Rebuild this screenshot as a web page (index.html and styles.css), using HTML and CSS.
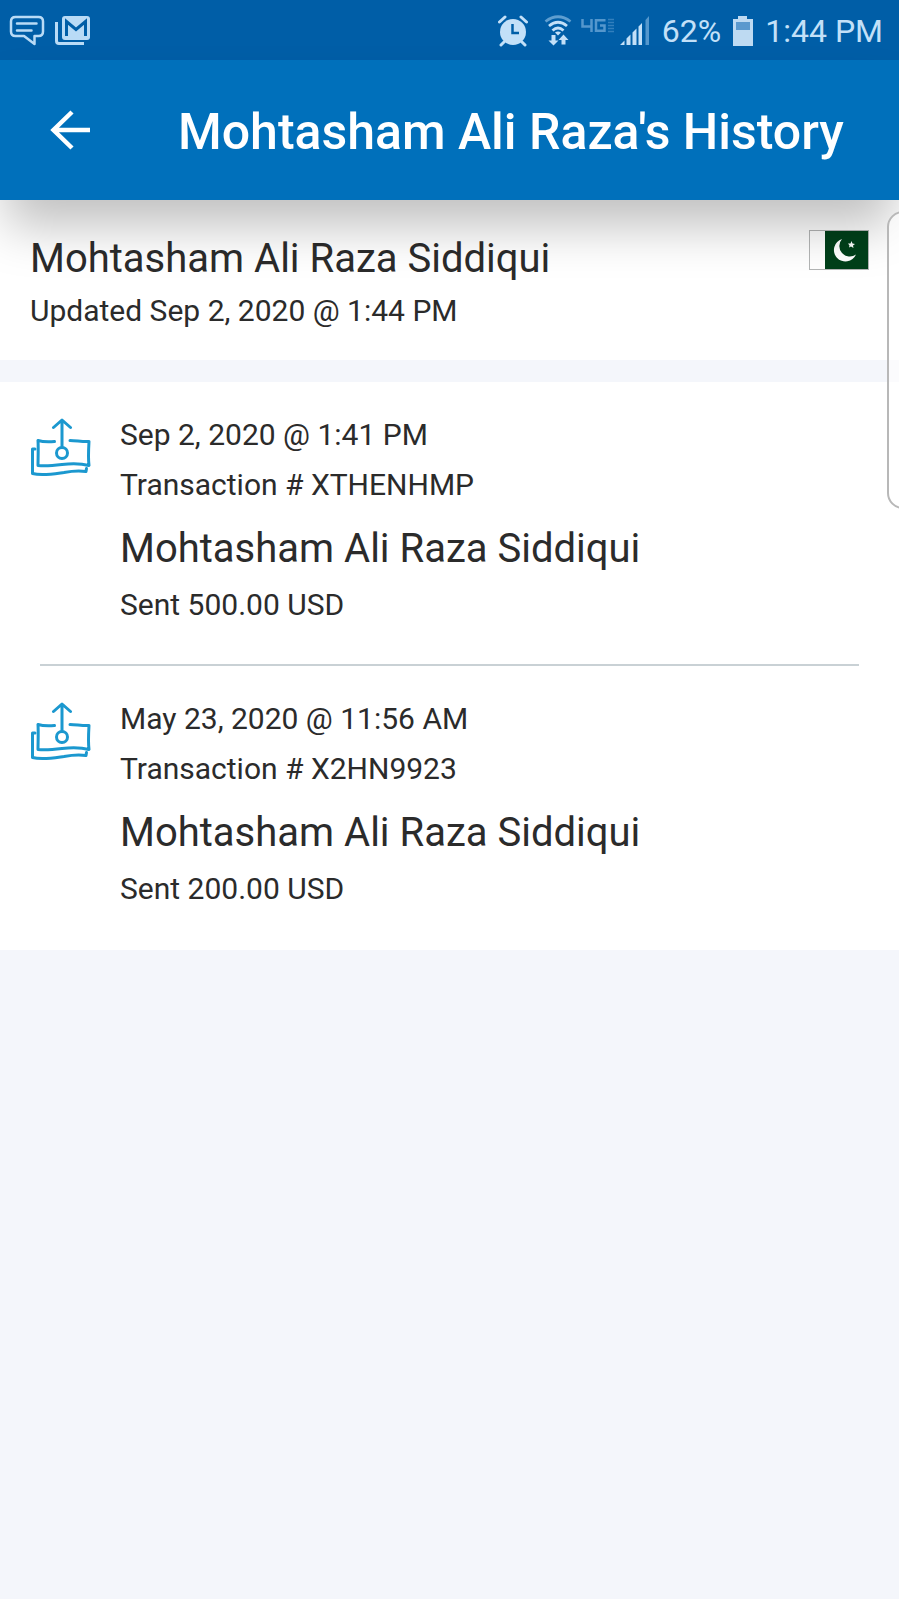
FILE: index.html
```html
<!DOCTYPE html>
<html lang="en">
<head>
<meta charset="utf-8">
<meta name="viewport" content="width=device-width, initial-scale=1">
<title>Mohtasham Ali Raza's History</title>
<link rel="stylesheet" href="styles.css">
</head>
<body>
<svg class="defs" width="0" height="0" aria-hidden="true">
  <symbol id="money-sent" viewBox="0 0 64 60">
    <g fill="none" stroke="#1b98cf" stroke-width="3" stroke-linecap="round" stroke-linejoin="round">
      <path d="M24.500 23.500C18 24 13 24 8 22.500C8.500 31 8 40 8 47.500C16 48.500 24 47.500 32 46.500C42 45.500 51 45.500 59 47.500C58 40 58.500 32 59 23.500C53 24 46 22.500 40 22.500"/>
      <path d="M5 31H2.500V55.500C12 58 23 56 34 54.500C42 53 49 52.500 56 53.500L56.500 50.500"/>
      <circle cx="32" cy="35" r="5.500"/>
      <path d="M32 29V3M23.500 9.500L32 2L40.500 9.500"/>
    </g>
  </symbol>
</svg>

<div class="status">
  <div class="status-group">
    <svg width="36" height="32" viewBox="0 0 36 32" fill="none" stroke="#b9dbf6" stroke-width="2.500" stroke-linecap="round" stroke-linejoin="round"><path d="M6.500 2H29.500Q34 2 34 6.500V16.500Q34 21 29.500 21H25.500V29L15 21H6.500Q2 21 2 16.500V6.500Q2 2 6.500 2Z"/><path d="M8 8.500H27.500M8 15.500H22.500"/></svg>
    <svg width="36" height="32" viewBox="0 0 36 32"><rect x="7" y="1" width="28" height="24" rx="3" fill="#b9dbf6"/><path d="M1.500 7V26Q1.500 28.500 4 28.500H29" fill="none" stroke="#b9dbf6" stroke-width="3"/><path d="M11.500 21V6.500L21 14.500L30.500 6.500V21" fill="none" stroke="#005ea7" stroke-width="3"/></svg>
  </div>
  <div class="status-group status-right">
    <svg class="alarm" width="30" height="32" viewBox="0 0 30 32"><circle cx="15" cy="17" r="13" fill="#c3e0f8"/><path d="M1.500 7L7 2M28.500 7L23 2M6 27L3 30M24 27L27 30" stroke="#c3e0f8" stroke-width="3" stroke-linecap="round"/><path d="M14.500 9V18H21" fill="none" stroke="#005ea7" stroke-width="2.500"/></svg>
    <svg class="wifi" width="28" height="32" viewBox="0 0 28 32" fill="none" stroke="#c3e0f8" stroke-width="2.800"><path d="M1.500 6.500Q14 -3 26.500 6.500" stroke="#5e9ed0"/><path d="M5 11Q14 3.500 23 11M8.500 15.500Q14 10.500 19.500 15.500"/><path d="M14 20.500L11 17.500Q14 15.500 17 17.500Z" fill="#c3e0f8" stroke="none"/><path d="M7.500 20H11.500V25.500H14.500L9.500 30.500L4.500 25.500H7.500ZM17.500 29.500H21.500V25H24.500L19.500 19.500L14.500 25H17.500Z" fill="#c3e0f8" stroke="none"/></svg>
    <svg class="lte" width="36" height="32" viewBox="0 0 36 32" fill="none" stroke="#5497cd" stroke-width="2.500"><path d="M2.500 4V11.500H12M11.500 4V17M25.500 5.200H16V15.800H24.500V10.500H20"/><path d="M28 4.500H34M28 7.500H34M28 10.500H34M28 13.500H34M28 16.500H34" stroke="#327fbd" stroke-width="1.500"/></svg>
    <svg class="signal" width="30" height="30" viewBox="0 0 30 30"><path d="M0 29L4.500 24.500V29ZM6.500 22.500L10.500 18.500V29H6.500ZM12.500 16.500L16.500 12.500V29H12.500ZM18.500 10.500L22 7V29H18.500Z" fill="#c3e0f8"/><path d="M25.500 4L29 0V29H25.500Z" fill="#5497cd"/></svg>
    <span class="status-text">62%</span>
    <svg class="battery" width="20" height="30" viewBox="0 0 20 30"><path d="M5 0H14V3H20V30H0V3H5Z" fill="#bedaf2"/><path d="M3 6H17V14H3Z" fill="#5b99ce"/></svg>
    <span class="status-text">1:44 PM</span>
  </div>
</div>

<header class="appbar">
  <button class="back" type="button" aria-label="Back"><svg width="40" height="40" viewBox="0 0 40 40" fill="none" stroke="#fff" stroke-width="4.500"><path d="M40 20H3M22 2L3.500 20L22 38"/></svg></button>
  <h1 class="title">Mohtasham Ali Raza's History</h1>
</header>

<main class="content">
  <section class="person">
    <div>
      <h2 class="name">Mohtasham Ali Raza Siddiqui</h2>
      <p class="line">Updated Sep 2, 2020 @ 1:44 PM</p>
    </div>
    <svg class="flag" width="60" height="40" viewBox="0 0 60 40" role="img" aria-label="Pakistan"><rect x=".5" y=".5" width="59" height="39" fill="#fff" stroke="#b3b5b5"/><rect x="16" y="1" width="43" height="38" fill="#00401a"/><path d="M33 9A11.500 11.500 0 1 0 47 24.500A10.500 10.500 0 0 1 33 9Z" fill="#fff"/><path d="M42.500 11L43.500 13.500L46 14L44 15.500L44.500 18L42 16.500L40 17.500L40.500 15.500L39 13.500L41.500 13.500Z" fill="#fff"/></svg>
  </section>

  <ul class="history">
    <li class="item">
      <svg class="item-icon" width="64" height="60" aria-hidden="true"><use href="#money-sent"/></svg>
      <div>
        <p class="line">Sep 2, 2020 @ 1:41 PM</p>
        <p class="line">Transaction # XTHENHMP</p>
        <h3 class="name">Mohtasham Ali Raza Siddiqui</h3>
        <p class="line">Sent 500.00 USD</p>
      </div>
    </li>
    <li class="item">
      <svg class="item-icon" width="64" height="60" aria-hidden="true"><use href="#money-sent"/></svg>
      <div>
        <p class="line">May 23, 2020 @ 11:56 AM</p>
        <p class="line">Transaction # X2HN9923</p>
        <h3 class="name">Mohtasham Ali Raza Siddiqui</h3>
        <p class="line">Sent 200.00 USD</p>
      </div>
    </li>
  </ul>
  <div class="edge-handle"></div>
</main>
</body>
</html>
```
FILE: styles.css
```css
* { box-sizing: border-box; }

body {
  margin: 0;
  background: #f4f6fb;
  color: #2b2b2b;
  font-family: Roboto, "Liberation Sans", sans-serif;
}

h1, h2, h3, p, ul { margin: 0; padding: 0; }
svg { display: block; flex: none; }
.defs { position: absolute; }

.status {
  display: flex;
  justify-content: space-between;
  align-items: center;
  height: 60px;
  padding: 2px 16px 0 9px;
  background: #005ea7;
  color: #c3e0f8;
  font-size: 32px;
  line-height: 58px;
}
.status-group { display: flex; align-items: center; gap: 10px; }
.status-right { gap: 0; }
.wifi { margin: 0 8px 0 16px; }
.signal { margin-left: 4px; }
.status-text { margin-left: 12px; }
.battery { margin-left: 12px; }

.appbar {
  position: relative;
  z-index: 1;
  display: flex;
  align-items: center;
  height: 140px;
  padding: 0 50px;
  background: #0070bb;
  box-shadow: 0 32px 50px -6px rgba(0, 0, 0, 0.25);
}
.back {
  padding: 0;
  border: 0;
  background: none;
  cursor: pointer;
}
.title {
  margin-left: 88px;
  padding-top: 4px;
  color: #fff;
  font-size: 50px;
  font-weight: 500;
  line-height: 60px;
  white-space: nowrap;
}

.content { position: relative; overflow: hidden; }

.person {
  display: flex;
  justify-content: space-between;
  padding: 30px 30px 24px;
  background: #fff;
}
.name { padding-top: 2px; font-size: 40px; font-weight: 400; line-height: 54px; }
.line { font-size: 30px; line-height: 50px; }

.history {
  margin-top: 22px;
  background: #fff;
  list-style: none;
}
.item {
  position: relative;
  display: flex;
  gap: 26px;
  padding: 28px 30px 36px;
}
.item .name { margin: 10px 0 4px; }
.item:not(:last-child)::after {
  content: "";
  position: absolute;
  right: 40px;
  bottom: 0;
  left: 40px;
  height: 2px;
  background: #c9d1d5;
}
.item-icon { margin-top: 8px; }

.edge-handle {
  position: absolute;
  z-index: 2;
  top: 11px;
  right: -20px;
  width: 32px;
  height: 298px;
  border: 2px solid #b8b8b8;
  border-radius: 16px;
  background: rgba(255, 255, 255, 0.6);
}
```
